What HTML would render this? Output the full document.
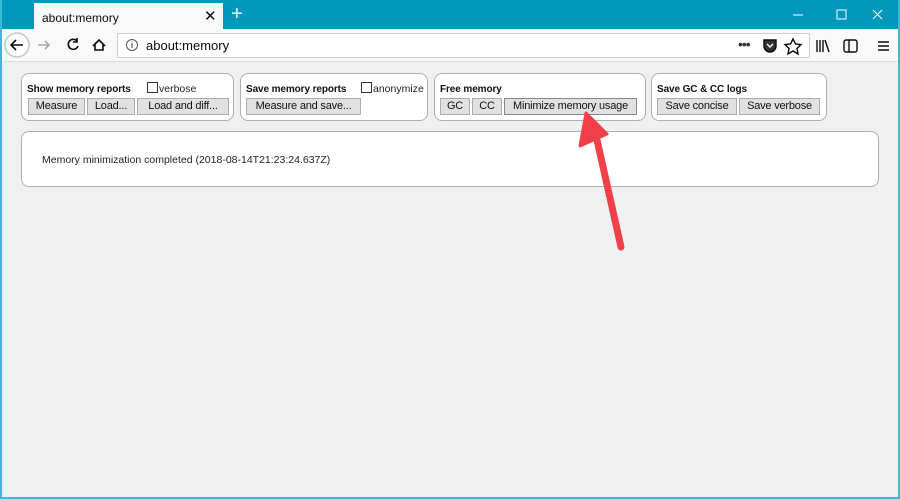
<!DOCTYPE html>
<html><head><style>
*{box-sizing:border-box;margin:0;padding:0}
body{width:900px;height:499px;overflow:hidden;background:#f0f0f0;font-family:"Liberation Sans",sans-serif;position:relative}
.frame{position:absolute;left:0;top:0;width:900px;height:499px;border:2px solid #3db8d8;border-top:none;pointer-events:none}
.title{position:absolute;left:0;top:0;width:900px;height:29px;background:#0097bd}
.tab{position:absolute;left:34px;top:3px;width:189px;height:26px;background:#f9f9fa;font-size:12px;color:#0c0c0d;padding:8px 0 0 8px}
.tb{position:absolute;left:0;top:29px;width:900px;height:33px;background:#f9f9fa;border-bottom:1px solid #ddd}
.url{position:absolute;left:117px;top:33px;width:693px;height:25px;background:#fff;border:1px solid #ccc;border-radius:2px;font-size:13px;color:#0c0c0d;padding:4px 0 0 28px}
.box{position:absolute;top:73px;height:48px;border:1px solid #b0b0b0;border-radius:8px;background:#fff}
.h{position:absolute;top:10px;left:5px;font-size:10px;font-weight:bold;color:#111;letter-spacing:-0.1px}
.btn{position:absolute;top:24px;height:17px;background:#e1e1e1;border:1px solid #adadad;font-size:11px;color:#111;text-align:center;line-height:15px;white-space:nowrap;letter-spacing:-0.2px}
.cb{position:absolute;top:8px;font-size:10.5px;color:#222}
.cb i{display:inline-block;width:11px;height:11px;border:1px solid #333;background:#fff;vertical-align:-1px;margin-right:1px}
.msg{position:absolute;left:21px;top:131px;width:858px;height:56px;border:1px solid #b0b0b0;border-radius:8px;background:#fff;font-size:10.5px;color:#222;padding:22px 0 0 20px}
</style></head><body>
<div class="title"></div>
<div class="tab">about:memory<span style="position:absolute;left:170px;top:4px;font-size:15px">✕</span></div>
<div style="position:absolute;left:231px;top:3px;color:#fff;font-size:20px">+</div>
<svg style="position:absolute;left:790px;top:6px" width="100" height="18"><path d="M3 9h10M47 4h9v9h-9z" stroke="#fff" fill="none"/><path d="M83 4l9 9M92 4l-9 9" stroke="#fff"/></svg>
<div class="tb"></div>
<svg style="position:absolute;left:0;top:29px" width="117" height="33" fill="none" stroke="#0c0c0d" stroke-width="1.6">
<circle cx="17" cy="16" r="12" fill="#fff" stroke="#c8c8c8"/>
<path d="M11 16h12M16 11l-5 5 5 5"/>
<path d="M38 16h11M45 12l4 4-4 4" stroke="#aaa"/>
<path d="M77 12a5 5 0 1 0 1 5M77 9v4h-4"/>
<path d="M93 17l6-6 6 6M95 15v6h8v-6" /></svg>
<div class="url"><span style="position:absolute;left:8px;top:5px;font-size:9px;border:1px solid #555;border-radius:50%;width:12px;height:12px;line-height:10px;text-align:center">i</span>about:memory</div>
<div style="position:absolute;left:738px;top:36px;font-size:14px;color:#333;letter-spacing:-1px">•••</div>
<svg style="position:absolute;left:760px;top:36px" width="140" height="20" stroke="#0c0c0d" fill="none" stroke-width="1.4"><path d="M4 4h12v6a6 6 0 0 1-12 0z" fill="#333"/><path d="M7 8l3 3 3-3" stroke="#fff"/><path d="M33 3l2.5 5 5.5.5-4 4 1 5.5-5-3-5 3 1-5.5-4-4 5.5-.5z"/><path d="M57 4v12M60 4v12M63 4v12M65 4l4 12"/><rect x="84" y="4" width="13" height="12" rx="2"/><path d="M89 4v12"/><path d="M118 6h11M118 10h11M118 14h11"/></svg>
<div class="box" style="left:21px;width:213px"><div class="h">Show memory reports</div><div class="cb" style="left:125px"><i></i>verbose</div>
<div class="btn" style="left:6px;width:57px">Measure</div><div class="btn" style="left:65px;width:48px">Load...</div><div class="btn" style="left:115px;width:92px">Load and diff...</div></div>
<div class="box" style="left:240px;width:188px"><div class="h">Save memory reports</div><div class="cb" style="left:120px"><i></i>anonymize</div>
<div class="btn" style="left:5px;width:115px">Measure and save...</div></div>
<div class="box" style="left:434px;width:212px"><div class="h">Free memory</div>
<div class="btn" style="left:5px;width:30px">GC</div><div class="btn" style="left:37px;width:30px">CC</div><div class="btn" style="left:69px;width:133px;border-color:#888">Minimize memory usage</div></div>
<div class="box" style="left:651px;width:176px"><div class="h">Save GC &amp; CC logs</div>
<div class="btn" style="left:5px;width:80px">Save concise</div><div class="btn" style="left:87px;width:81px">Save verbose</div></div>
<div class="msg">Memory minimization completed (2018-08-14T21:23:24.637Z)</div>
<svg style="position:absolute;left:0;top:0" width="900" height="499"><path d="M597 140L621 247" stroke="#f2404a" stroke-width="7" stroke-linecap="round"/><path d="M586 113L607 134L580 146Z" fill="#f2404a" stroke="#f2404a" stroke-width="3" stroke-linejoin="round"/></svg>
<div class="frame"></div>
</body></html>
